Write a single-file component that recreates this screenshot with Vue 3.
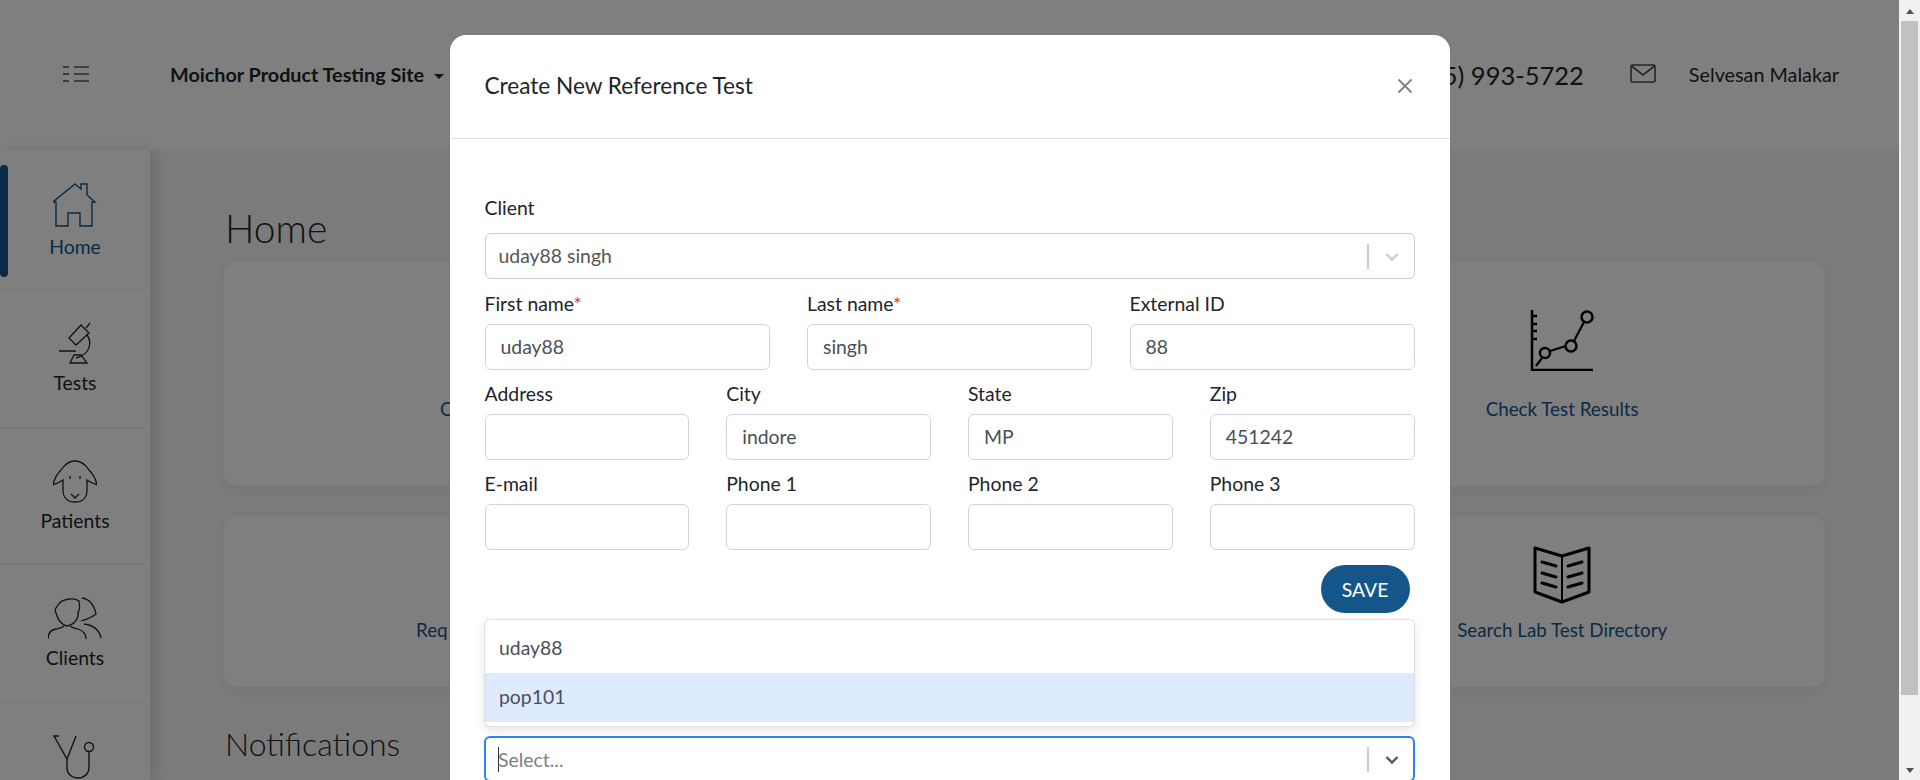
<template>
  <div class="screen">
    <div class="page">
      <header class="topbar">
        <svg class="menu-icon" width="26" height="16" viewBox="0 0 26 16">
          <path d="M0 1h6M0 8h6M0 15h6" stroke="#4a4a4a" stroke-width="1.5" />
          <path d="M11 1h15M11 8h15M11 15h15" stroke="#5e5e5e" stroke-width="1.5" />
        </svg>
        <div class="site">Moichor Product Testing Site <span class="site-caret"></span></div>
        <div class="phone">(415) 993-5722</div>
        <svg class="mail-icon" width="26" height="19" viewBox="0 0 26 19" fill="none" stroke="#4c4c4c" stroke-width="1.6">
          <rect x="1" y="1" width="24" height="17" rx="1.5" />
          <path d="M1.5 2 13 11 24.5 2" />
        </svg>
        <div class="user">Selvesan Malakar</div>
      </header>

      <div class="below">
        <nav class="sidebar">
          <a class="nav-item active">
            <svg width="44" height="44" viewBox="0 0 44 44" fill="none" stroke="currentColor" stroke-width="1.4">
              <path d="M22 1 28 6V1h6v11l8 7h-3v24H27V30H15v13H3V19H0Z" />
            </svg>
            <span>Home</span>
          </a>
          <a class="nav-item">
            <svg width="44" height="43" viewBox="-6 0 44 43" fill="none" stroke="currentColor" stroke-width="1.3">
              <path d="M10 16 22 3l8 8-13 12ZM27 6l4-5M28 13c5 7 4 19-11 23M0 29h17M15 33h7l6 8H11Z" />
            </svg>
            <span>Tests</span>
          </a>
          <a class="nav-item">
            <svg width="44" height="43" viewBox="0 0 44 43" fill="none" stroke="currentColor" stroke-width="1.3">
              <path d="M8 10C12 4 17 1 22 1s10 3 14 9c4 4 7 10 8 15-3-1-7-3-10-5v10c0 8-5 12-12 12s-12-4-12-12V20c-3 2-7 4-10 5 1-5 4-11 8-15Z" />
              <path d="M17 16v3M27 16v3M18 34l4 4 4-4" />
            </svg>
            <span>Patients</span>
          </a>
          <a class="nav-item">
            <svg width="54" height="43" viewBox="0 0 54 43" fill="none" stroke="currentColor" stroke-width="1.3">
              <path d="M10 8c3-6 16-8 21-4 0 4 2 8-1 11 1 5-2 12-11 14-8-2-10-9-11-13-2-4 0-5 2-8Z" />
              <path d="M0 42c0-6 2-9 8-10 3-1 6-1 8-3M22 29c2 2 5 2 8 3 6 2 8 5 8 10" />
              <path d="M34 1c7 1 12 7 14 16-4 3-8 5-15 7M36 27c8 1 15 5 17 14" />
            </svg>
            <span>Clients</span>
          </a>
          <a class="nav-item">
            <svg width="44" height="44" viewBox="0 0 44 44" fill="none" stroke="currentColor" stroke-width="1.4">
              <path d="M0 1h6M1 1l13 23L23 1M14 24v9c0 6 5 10 11 10s11-4 11-11V17" />
              <circle cx="36" cy="12" r="4.5" />
            </svg>
          </a>
        </nav>

        <main class="content">
          <h1>Home</h1>
          <section class="card card-top">
            <div class="tile first"><span class="tile-label">C</span></div>
            <div class="tile last">
              <svg width="64" height="62" viewBox="0 0 64 62" fill="none" stroke="#000">
                <path d="M2 1v60h61" stroke-width="2.5" />
                <path d="M2 7h5M2 15h5M2 22h5M2 30h5" stroke-width="2.5" />
                <circle cx="15" cy="44" r="5" stroke-width="2.5" />
                <circle cx="41" cy="37" r="5.5" stroke-width="2.5" />
                <circle cx="57" cy="8" r="5.5" stroke-width="2.5" />
                <path d="m6 57 6-8M20 42l16-5M44 32l10-19" stroke-width="2.2" />
              </svg>
              <span class="tile-label">Check Test Results</span>
            </div>
          </section>
          <section class="card card-bottom">
            <div class="tile first"><span class="tile-label">Req</span></div>
            <div class="tile last">
              <svg width="58" height="58" viewBox="0 0 58 58" fill="none" stroke="#000" stroke-width="3" stroke-linejoin="round" stroke-linecap="round">
                <path d="M2 2 29 10 56 2V46L29 56 2 46Z" />
                <path d="M29 10V56" stroke-width="2" />
                <path d="M9 16l14 4M9 27l14 4M9 37l14 4M49 16l-14 4M49 27l-14 4M49 37l-14 4" />
              </svg>
              <span class="tile-label">Search Lab Test Directory</span>
            </div>
          </section>
          <h2>Notifications</h2>
        </main>
      </div>

      <div class="backdrop">
        <div class="modal">
          <div class="modal-head">
            <div class="modal-title">Create New Reference Test</div>
            <svg class="close" width="16" height="16" viewBox="0 0 16 16">
              <path d="M1.500 1.500l13 13M14.500 1.500l-13 13" stroke="#858585" stroke-width="2" />
            </svg>
          </div>
          <div class="modal-body">
            <label class="lbl">Client</label>
            <div class="select">
              <span class="select-value">uday88 singh</span>
              <span class="select-sep"></span>
              <svg width="20" height="20" viewBox="0 0 20 20" class="chev">
                <path d="M4.5 8 10 13.5 15.500 8" fill="none" stroke="#cccccc" stroke-width="2.4" />
              </svg>
            </div>

            <div class="row three">
              <div v-for="f in nameFields" :key="f.label" class="field">
                <label class="lbl">{{ f.label }}<span v-if="f.required" class="req">*</span></label>
                <div class="input">{{ f.value }}</div>
              </div>
            </div>
            <div class="row four">
              <div v-for="f in addressFields" :key="f.label" class="field">
                <label class="lbl">{{ f.label }}</label>
                <div class="input">{{ f.value }}</div>
              </div>
            </div>
            <div class="row four">
              <div v-for="f in contactFields" :key="f.label" class="field">
                <label class="lbl">{{ f.label }}</label>
                <div class="input"></div>
              </div>
            </div>

            <div class="actions"><button class="save">SAVE</button></div>

            <div class="select focused">
              <div class="menu">
                <div class="option">uday88</div>
                <div class="option hover">pop101</div>
              </div>
              <span class="caret"></span>
              <span class="select-placeholder">Select...</span>
              <span class="select-sep"></span>
              <svg width="20" height="20" viewBox="0 0 20 20" class="chev">
                <path d="M4.5 8 10 13.5 15.500 8" fill="none" stroke="#555" stroke-width="2.4" />
              </svg>
            </div>
          </div>
        </div>
      </div>
    </div>

    <div class="scrollbar">
      <span class="arrow up"></span>
      <div class="thumb"></div>
      <span class="arrow down"></span>
    </div>
  </div>
</template>

<script setup>
const nameFields = [
  { label: "First name", value: "uday88", required: true },
  { label: "Last name", value: "singh", required: true },
  { label: "External ID", value: "88" },
];
const addressFields = [
  { label: "Address", value: "" },
  { label: "City", value: "indore" },
  { label: "State", value: "MP" },
  { label: "Zip", value: "451242" },
];
const contactFields = [
  { label: "E-mail" },
  { label: "Phone 1" },
  { label: "Phone 2" },
  { label: "Phone 3" },
];
</script>

<style>
html,
body {
  margin: 0;
  overflow: hidden;
}
</style>

<style scoped>
.screen {
  display: flex;
  width: 1920px;
  height: 780px;
  overflow: hidden;
  font-family: Lato, "Noto Sans", sans-serif;
  font-size: 19.400px;
  color: #212529;
}
.page {
  position: relative;
  flex: 1;
  height: 780px;
  overflow: hidden;
  background: #f6f6f6;
}

/* top bar */
.topbar {
  display: flex;
  align-items: center;
  height: 150px;
  box-sizing: border-box;
  padding: 0 60px 2px 63px;
  background: #fff;
}
.menu-icon {
  margin-right: 81px;
}
.site {
  font-size: 19.800px;
  font-weight: 700;
  white-space: nowrap;
}
.site-caret {
  display: inline-block;
  margin-left: 5px;
  vertical-align: 3px;
  border-top: 5px solid #212529;
  border-left: 5px solid transparent;
  border-right: 5px solid transparent;
}
.phone {
  margin-left: auto;
  padding-top: 2px;
  font-size: 25.500px;
}
.mail-icon {
  margin: 0 33px 2px 46px;
}
.user {
  font-size: 19.800px;
  white-space: nowrap;
}

.below {
  display: flex;
  height: 630px;
}

/* left nav */
.sidebar {
  flex: 0 0 150px;
  background: #fff;
  box-shadow: 6px 0 14px rgba(0, 0, 0, 0.12);
  z-index: 1;
}
.nav-item {
  position: relative;
  display: flex;
  flex-direction: column;
  align-items: center;
  gap: 6px;
  box-sizing: border-box;
  height: 137.500px;
  padding-top: 32px;
  border-bottom: 1px solid #f0f0f0;
}
.nav-item:first-child {
  height: 140px;
  padding-top: 33px;
  gap: 8px;
}
.nav-item.active {
  color: #15568a;
}
.nav-item.active::before {
  content: "";
  position: absolute;
  left: 0;
  top: 15px;
  width: 8px;
  height: 112px;
  background: #15568a;
  border-radius: 5px;
}

/* main area */
.content {
  flex: 1;
  padding: 0 74px 0 74px;
}
h1,
h2 {
  margin: 0;
  padding-left: 1px;
  font-size: 39px;
  font-weight: 300;
  line-height: 46px;
}
h1 {
  padding-top: 55px;
  margin-bottom: 11px;
}
h2 {
  margin-top: 34px;
  font-size: 32px;
}
.card {
  display: grid;
  grid-template-columns: repeat(3, 1fr);
  padding-left: 24px;
  background: #fff;
  border-radius: 14px;
  box-shadow: 0 4px 16px rgba(0, 0, 0, 0.05);
}
.card-top {
  height: 224px;
  margin-bottom: 30px;
}
.card-bottom {
  height: 171px;
}
.tile {
  display: flex;
  flex-direction: column;
  align-items: center;
}
.tile.first {
  align-items: flex-start;
}
.tile.last {
  grid-column: 3;
}
.card-top .tile {
  padding-top: 47px;
  gap: 26px;
}
.card-bottom .tile {
  padding-top: 30px;
  gap: 14px;
}
.card-top .tile.first {
  padding: 135px 0 0 192px;
}
.card-bottom .tile.first {
  padding: 102px 0 0 168px;
}
.tile-label {
  color: #15568a;
  font-size: 18.800px;
  line-height: 24px;
  white-space: nowrap;
}

/* modal */
.backdrop {
  position: absolute;
  inset: 0;
  z-index: 5;
  display: flex;
  justify-content: center;
  background: rgba(0, 0, 0, 0.5);
}
.modal {
  width: 1000px;
  height: 900px;
  margin-top: 35px;
  background: #fff;
  border-radius: 16px;
}
.modal-head {
  display: flex;
  align-items: center;
  justify-content: space-between;
  box-sizing: border-box;
  height: 104px;
  padding: 0 37px 2px 35px;
  border-bottom: 1px solid #dee2e6;
}
.modal-title {
  font-size: 22.600px;
}
.modal-body {
  padding: 57px 35px 0;
}
.lbl {
  display: block;
  height: 24px;
  line-height: 23px;
}
.req {
  color: #e0344a;
}
.select {
  position: relative;
  display: flex;
  align-items: center;
  box-sizing: border-box;
  height: 46px;
  margin-top: 13px;
  padding: 0 13px;
  border: 1px solid #ccc;
  border-radius: 6px;
  color: #555;
}
.select-value,
.select-placeholder {
  flex: 1;
}
.select-value {
  padding-bottom: 2px;
}
.select-placeholder {
  color: #808080;
  margin-left: -1px;
}
.select-sep {
  width: 1px;
  height: 25px;
  margin-right: 13px;
  background: #ccc;
  border-right: 1px solid #ccc;
}
.chev {
  margin-right: -1px;
}
.row {
  display: grid;
  margin-top: 13px;
}
.row.three {
  grid-template-columns: repeat(3, 1fr);
  column-gap: 37.500px;
}
.row.four {
  grid-template-columns: repeat(4, 1fr);
  column-gap: 37px;
  margin-top: 12px;
}
.input {
  box-sizing: border-box;
  height: 46px;
  margin-top: 8px;
  padding: 0 15px;
  line-height: 44px;
  border: 1px solid #ced4da;
  border-radius: 6px;
  color: #495057;
}
.actions {
  display: flex;
  justify-content: flex-end;
  margin-top: 15px;
  padding-right: 5px;
}
.save {
  width: 89px;
  height: 48px;
  padding: 0;
  border: 0;
  border-radius: 24px;
  background: #15568a;
  color: #fff;
  font: inherit;
}
.select.focused {
  margin-top: 123px;
  border: 2px solid #2684ff;
  margin-left: -0.5px;
  margin-right: -0.5px;
  padding: 0 12px;
}
.caret {
  width: 1px;
  height: 25px;
  background: #333;
}
.menu {
  position: absolute;
  left: -2px;
  right: -2px;
  bottom: calc(100% + 11px);
  box-sizing: border-box;
  height: 108px;
  padding: 4px 0;
  background: #fff;
  border: 1px solid rgba(0, 0, 0, 0.12);
  border-radius: 6px;
  box-shadow: 0 4px 11px rgba(0, 0, 0, 0.1);
  color: #495057;
}
.option {
  height: 49px;
  padding: 0 14px;
  line-height: 48px;
}
.option.hover {
  background: #deebff;
}

/* scrollbar */
.scrollbar {
  position: relative;
  flex: 0 0 21px;
  display: flex;
  flex-direction: column;
  align-items: center;
  background: #f1f1f1;
}
.thumb {
  position: absolute;
  top: 21px;
  left: 2px;
  width: 17px;
  height: 674px;
  background: #c1c1c1;
}
.arrow {
  position: absolute;
  width: 0;
  height: 0;
  border-left: 4.500px solid transparent;
  border-right: 4.500px solid transparent;
}
.arrow.up {
  top: 9px;
  border-bottom: 5px solid #505050;
}
.arrow.down {
  bottom: 7px;
  border-top: 5px solid #505050;
}
</style>
